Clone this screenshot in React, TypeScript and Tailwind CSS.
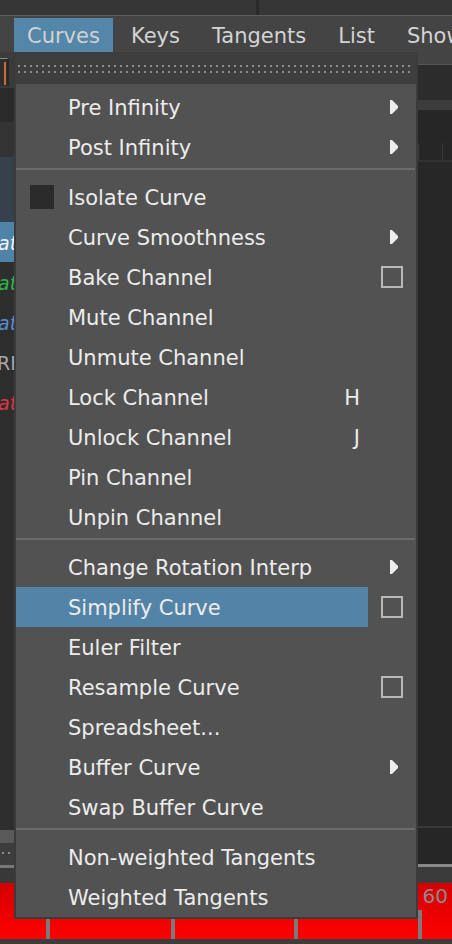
import React from "react";

type Right = "arrow" | "box" | undefined;

function Arrow() {
  return (
    <svg width="8" height="14" viewBox="0 0 8 14" className="block">
      <polygon points="0,0 2,0 8,6 8,8 2,14 0,14" fill="#eeeeee" />
    </svg>
  );
}

function Item({
  label,
  right,
  shortcut,
  active,
  square,
}: {
  label: string;
  right?: Right;
  shortcut?: string;
  active?: boolean;
  square?: boolean;
}) {
  return (
    <div className="flex h-[40px]">
      <div
        className={
          "flex w-[352px] items-center " +
          (active ? "bg-[#5384a8] " : "") +
          (square ? "pl-[14px]" : "pl-[52px]")
        }
      >
        {square && <div className="mr-[14px] h-[24px] w-[24px] bg-[#2b2b2b]" />}
        <span className="flex-1 whitespace-nowrap pt-[4px] text-[21px] text-[#ececec]">{label}</span>
        {shortcut && (
          <span className="pr-[8px] pt-[4px] text-[21px] text-[#ececec]">{shortcut}</span>
        )}
      </div>
      <div className="flex w-[48px] items-center">
        {right === "arrow" && (
          <div className="ml-[22px]">
            <Arrow />
          </div>
        )}
        {right === "box" && (
          <div className="ml-[13px] h-[22px] w-[22px] border-2 border-[#b8b8b8]" />
        )}
      </div>
    </div>
  );
}

function Sep() {
  return (
    <div className="h-[10px] pt-[1px]">
      <div className="mr-[1px] h-[2px] bg-[#6a6a6a]" />
    </div>
  );
}

function Dots() {
  const dots = Array.from({ length: 66 });
  return (
    <div className="flex gap-[4px] pl-[2px]">
      {dots.map((_, i) => (
        <div key={i} className="h-[2px] w-[2px] shrink-0 bg-[#8c8c8c]" />
      ))}
    </div>
  );
}

function LeftRow({ text, color, bg }: { text: string; color: string; bg?: string }) {
  return (
    <div className={"flex h-[40px] items-center " + (bg ?? "")}>
      <span
        className="ml-[-2px] whitespace-nowrap pt-[2px] text-[19px] italic"
        style={{ color }}
      >
        {text}
      </span>
    </div>
  );
}

export default function App() {
  return (
    <div className="relative h-[944px] w-[452px] overflow-hidden bg-[#2e2e2e] font-['DejaVu_Sans',sans-serif]">
      {/* top strip */}
      <div className="flex h-[15px]">
        <div className="w-[256px] bg-[#363636]" />
        <div className="w-[3px] bg-[#2a2a2a]" />
        <div className="flex-1 bg-[#363636]" />
      </div>
      <div className="h-[1px] bg-[#5e5e5e]" />
      {/* menubar */}
      <div className="flex h-[36px] items-end bg-[#444444]">
        <div className="ml-[14px] flex h-[34px] items-center bg-[#5386a9] px-[13px] pt-[4px] text-[21px] text-[#d2d2d2]">
          Curves
        </div>
        <div className="flex h-[34px] items-center gap-[32px] pl-[18px] pt-[4px] text-[21px] text-[#d4d4d4] whitespace-nowrap">
          <span>Keys</span>
          <span>Tangents</span>
          <span>List</span>
          <span>Show</span>
        </div>
      </div>
      {/* body */}
      <div className="flex h-[831px]">
        {/* left panel */}
        <div className="flex w-[256px] flex-col overflow-hidden">
          <div className="h-[5px] bg-[#3c3c3c]" />
          <div className="flex h-[31px] bg-[#3a3a3a]">
            <div className="mt-[1px] flex h-[28px] w-[9px] border-t border-r-2 border-t-[#8a8a8a] border-r-[#262626] bg-[#2f2f2f]">
              <div className="ml-[4px] mt-[3px] h-[23px] w-[2px] bg-[#d2673c]" />
            </div>
          </div>
          <div className="h-[34px] bg-[#2a2a2a]" />
          <div className="h-[35px] bg-[#333333]" />
          <div className="h-[65px] bg-[#37414b]" />
          <LeftRow text="at" color="#f2f2f2" bg="bg-[#5083a8]" />
          <LeftRow text="at" color="#2fb54a" />
          <LeftRow text="at" color="#5b8ad6" />
          <div className="flex h-[40px] items-center">
            <span className="ml-[-3px] pt-[2px] text-[19px] text-[#a8a8a8]">RF</span>
          </div>
          <LeftRow text="at" color="#dd3548" />
          <div className="h-[408px] bg-[#2e2e2e]" />
          <div className="h-[13px] bg-[#5a5a5a]" />
          <div className="h-[22px] bg-[#3d3d3d] pt-[9px]">
            <Dots />
          </div>
          <div className="h-[3px] bg-[#777777]" />
          <div className="h-[15px] bg-[#383838]" />
        </div>
        {/* right panel */}
        <div className="flex flex-1 flex-col">
          <div className="h-[12px] bg-[#444444]" />
          <div className="h-[1px] bg-[#555555]" />
          <div className="h-[35px] bg-[#2c2c2c]" />
          <div className="h-[10px] bg-[#3c3c3c]" />
          <div className="relative h-[50px] bg-[#262626]">
            <div className="flex h-full items-start justify-end">
              <div className="mr-[9px] flex h-full w-[25px] flex-col">
                <div className="h-[33px]" />
                <div className="flex h-[17px] justify-between">
                  <div className="w-[1px] bg-[#3a3a3a]" />
                  <div className="w-[1px] bg-[#3a3a3a]" />
                </div>
              </div>
            </div>
          </div>
          <div className="h-[2px] bg-[#333333]" />
          <div className="h-[664px] bg-[#272727]" />
          <div className="h-[2px] bg-[#3a3a3a]" />
          <div className="h-[36px] bg-[#262626]" />
          <div className="h-[3px] bg-[#888888]" />
          <div className="h-[16px] bg-[#3b3b3b]" />
        </div>
      </div>
      {/* red range bar */}
      <div className="flex h-[56px] flex-col bg-gradient-to-b from-[#d40000] to-[#ff0000]">
        <div className="flex h-[27px] justify-end">
          <span className="mr-[4px] mt-[2px] text-[20px] leading-[22px] text-[#8a8a8a]">60</span>
        </div>
        <div className="flex h-[29px]">
          <div className="ml-[46px] w-[4px] bg-[#7a7a7a]" />
          <div className="ml-[121px] w-[4px] bg-[#7a7a7a]" />
          <div className="ml-[119px] w-[4px] bg-[#7a7a7a]" />
          <div className="ml-[120px] w-[4px] bg-[#7a7a7a]" />
        </div>
      </div>
      <div className="h-[5px] bg-[#3c3c3c]" />

      {/* dropdown menu */}
      <div className="absolute left-[14px] top-[52px] w-[404px] border-2 border-t border-[#3b3b3b] bg-[#525252]">
        <div className="flex h-[31px] flex-col gap-[4px] bg-[#3e3e3e] pt-[12px]">
          <Dots />
          <Dots />
        </div>
        <div className="pt-[3px]">
          <Item label="Pre Infinity" right="arrow" />
          <Item label="Post Infinity" right="arrow" />
          <Sep />
          <Item label="Isolate Curve" square />
          <Item label="Curve Smoothness" right="arrow" />
          <Item label="Bake Channel" right="box" />
          <Item label="Mute Channel" />
          <Item label="Unmute Channel" />
          <Item label="Lock Channel" shortcut="H" />
          <Item label="Unlock Channel" shortcut="J" />
          <Item label="Pin Channel" />
          <Item label="Unpin Channel" />
          <Sep />
          <Item label="Change Rotation Interp" right="arrow" />
          <Item label="Simplify Curve" right="box" active />
          <Item label="Euler Filter" />
          <Item label="Resample Curve" right="box" />
          <Item label="Spreadsheet..." />
          <Item label="Buffer Curve" right="arrow" />
          <Item label="Swap Buffer Curve" />
          <Sep />
          <Item label="Non-weighted Tangents" />
          <Item label="Weighted Tangents" />
        </div>
      </div>
    </div>
  );
}
